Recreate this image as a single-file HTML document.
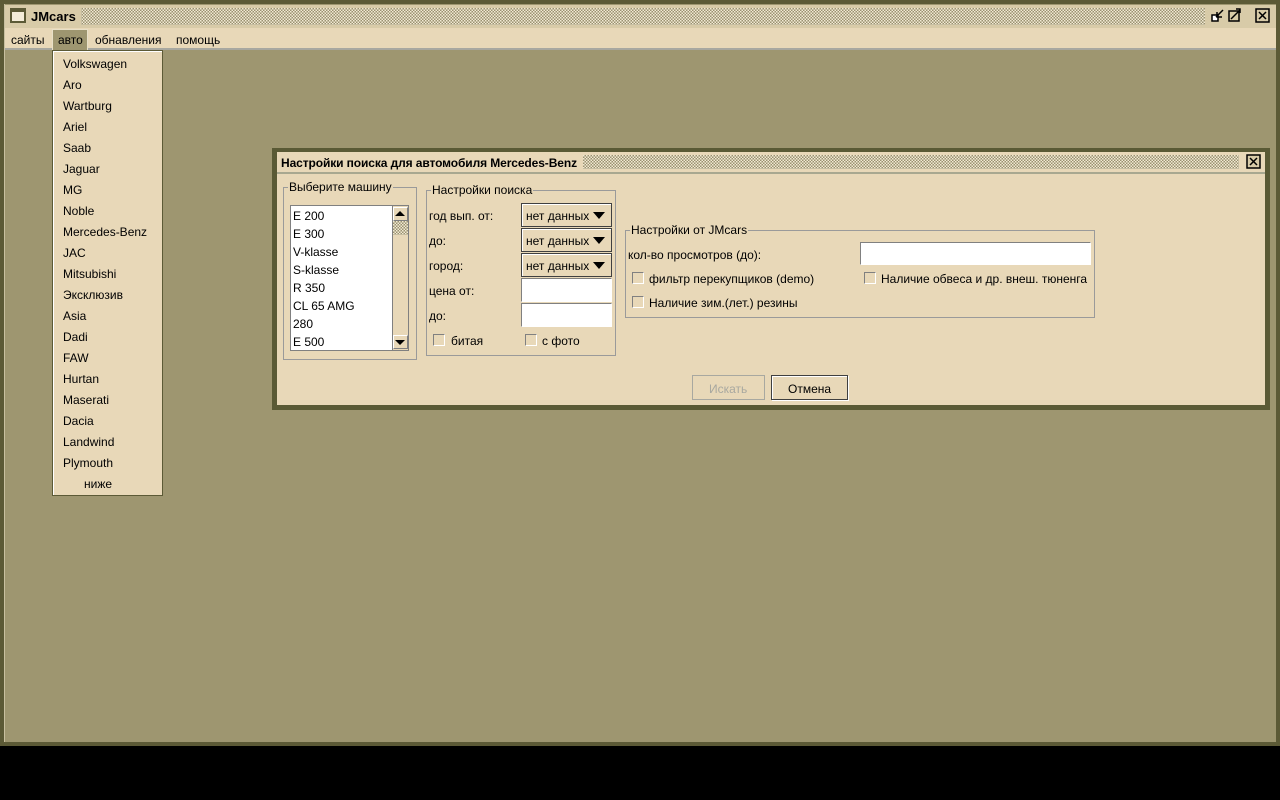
<!DOCTYPE html>
<html><head><meta charset="utf-8"><style>
*{margin:0;padding:0;box-sizing:border-box}
body{width:1280px;height:800px;background:#000;position:relative;overflow:hidden;font-family:"Liberation Sans",sans-serif;font-size:12px;color:#000}
.a{position:absolute}
.dots{background-color:#d8cba8;background-image:repeating-conic-gradient(#9a9170 0 25%,#f2ead4 0 50%);background-size:3px 3px}
.t{position:absolute;white-space:nowrap}
.grp{position:absolute;border:1px solid #9a9a9a}
.grp>.lg{position:absolute;top:-8px;left:4px;background:#e8d8b8;padding:0 1px}
.cb{position:absolute;width:12px;height:12px;border:1px solid #808080;border-right-color:#fff;border-bottom-color:#fff;background:#e8d8b8}
.inp{position:absolute;background:#fff;border:1px solid #808080;border-right-color:#fff;border-bottom-color:#fff}
.cmb{position:absolute;width:91px;height:24px;background:#e8d8b8;border:1px solid #404040;box-shadow:inset 1px 1px 0 #fff}
.cmb span{position:absolute;left:4px;top:5px}
.cmb i{position:absolute;right:6px;top:8px;border-left:6px solid transparent;border-right:6px solid transparent;border-top:7px solid #000}
</style></head><body>
<div class="a" style="left:0;top:0;width:1280px;height:746px;background:#5c5a36"></div>
<div class="a" style="left:4px;top:4px;width:1272px;height:738px;background:#9e9670;border-left:1px solid #c8c0a0"></div>
<div class="a dots" style="left:5px;top:5px;width:1271px;height:23px;"></div>
<div class="a" style="left:5px;top:5px;width:1271px;height:3px;background:#d8cba8"></div>
<div class="a" style="left:5px;top:25px;width:1271px;height:3px;background:#d8cba8"></div>
<div class="a" style="left:5px;top:5px;width:76px;height:23px;background:#d8cba8"></div>
<div class="a" style="left:1205px;top:5px;width:71px;height:23px;background:#d8cba8"></div>
<div class="a" style="left:10px;top:8px;width:16px;height:15px;border:2px solid #5c5a36;background:#f4ecd8"></div>
<div class="a" style="left:12px;top:10px;width:12px;height:2px;background:#5c5a36"></div>
<div class="t" style="left:31px;top:9px;font-weight:bold;font-size:13px">JMcars</div>
<svg class="a" style="left:1210px;top:8px" width="62" height="16" viewBox="0 0 62 16">
<rect x="2" y="7" width="6" height="6" fill="#fff" stroke="#000" stroke-width="1.5"/><path d="M6 9 L13 2 M7 4 v5 h5" stroke="#000" stroke-width="1.5" fill="none"/>
<rect x="19" y="3" width="10" height="10" fill="#d8cba8" stroke="#000" stroke-width="1.5"/><path d="M21 11 L30 2 M26 1 h4 v4" stroke="#000" stroke-width="1.5" fill="none"/>
<rect x="46" y="1" width="13" height="13" fill="#d8cba8" stroke="#000" stroke-width="1.5"/><path d="M49 4 L56 11 M56 4 L49 11" stroke="#000" stroke-width="1.5"/>
</svg>
<div class="a" style="left:5px;top:28px;width:1271px;height:22px;background:#e8d8b8;border-bottom:2px solid #a8a8a0"></div>
<div class="a" style="left:52px;top:29px;width:36px;height:21px;background:#9e9670;border:1px solid #e8e0c8;border-bottom:none"></div>
<div class="t" style="left:11px;top:33px">сайты</div>
<div class="t" style="left:58px;top:33px">авто</div>
<div class="t" style="left:95px;top:33px">обнавления</div>
<div class="t" style="left:176px;top:33px">помощь</div>
<div class="a" style="left:52px;top:50px;width:111px;height:446px;background:#e8d8b8;border:1px solid #5c5a36;box-shadow:inset 1px 1px 0 #fff"></div>
<div class="t" style="left:63px;top:54px;line-height:21px">Volkswagen<br>Aro<br>Wartburg<br>Ariel<br>Saab<br>Jaguar<br>MG<br>Noble<br>Mercedes-Benz<br>JAC<br>Mitsubishi<br>Эксклюзив<br>Asia<br>Dadi<br>FAW<br>Hurtan<br>Maserati<br>Dacia<br>Landwind<br>Plymouth<br><span style="padding-left:21px">ниже</span></div>
<div class="a" style="left:272px;top:148px;width:998px;height:262px;background:#5a5a35"></div>
<div class="a" style="left:277px;top:152px;width:988px;height:253px;background:#e8d8b8"></div>
<div class="a dots" style="left:583px;top:155px;width:656px;height:14px"></div>
<div class="a" style="left:277px;top:172px;width:988px;height:2px;background:#a8a890"></div>
<div class="t" style="left:281px;top:156px;font-weight:bold;letter-spacing:-0.1px">Настройки поиска для автомобиля Mercedes-Benz</div>
<svg class="a" style="left:1246px;top:154px" width="16" height="16"><rect x="1" y="1" width="13" height="13" fill="#d8cba8" stroke="#000" stroke-width="1.5"/><path d="M4 4 L11 11 M11 4 L4 11" stroke="#000" stroke-width="1.5"/></svg>
<div class="grp" style="left:283px;top:187px;width:134px;height:173px"><span class="lg">Выберите машину</span></div>
<div class="a" style="left:290px;top:205px;width:119px;height:146px;background:#fff;border:1px solid #808080"></div>
<div class="t" style="left:293px;top:207px;line-height:18px">E 200<br>E 300<br>V-klasse<br>S-klasse<br>R 350<br>CL 65 AMG<br>280<br>E 500</div>
<div class="a" style="left:392px;top:206px;width:16px;height:144px;background:#e8d8b8;border-left:1px solid #808080"></div>
<div class="a" style="left:393px;top:207px;width:15px;height:14px;border:1px solid #fff;border-right-color:#808080;border-bottom-color:#808080"></div>
<div class="a" style="left:395px;top:211px;border-left:5px solid transparent;border-right:5px solid transparent;border-bottom:5px solid #000"></div>
<div class="a dots" style="left:393px;top:221px;width:15px;height:14px;background-color:#a8a080"></div>
<div class="a" style="left:393px;top:335px;width:15px;height:14px;border:1px solid #fff;border-right-color:#808080;border-bottom-color:#808080"></div>
<div class="a" style="left:395px;top:340px;border-left:5px solid transparent;border-right:5px solid transparent;border-top:5px solid #000"></div>
<div class="grp" style="left:426px;top:190px;width:190px;height:166px"><span class="lg">Настройки поиска</span></div>
<div class="t" style="left:429px;top:209px">год вып. от:</div>
<div class="t" style="left:429px;top:234px">до:</div>
<div class="t" style="left:429px;top:259px">город:</div>
<div class="t" style="left:429px;top:284px">цена от:</div>
<div class="t" style="left:429px;top:309px">до:</div>
<div class="cmb" style="left:521px;top:203px"><span>нет данных</span><i></i></div>
<div class="cmb" style="left:521px;top:228px"><span>нет данных</span><i></i></div>
<div class="cmb" style="left:521px;top:253px"><span>нет данных</span><i></i></div>
<div class="inp" style="left:521px;top:278px;width:91px;height:24px"></div>
<div class="inp" style="left:521px;top:303px;width:91px;height:24px"></div>
<div class="cb" style="left:433px;top:334px"></div><div class="t" style="left:451px;top:334px">битая</div>
<div class="cb" style="left:525px;top:334px"></div><div class="t" style="left:542px;top:334px">с фото</div>
<div class="grp" style="left:625px;top:230px;width:470px;height:88px"><span class="lg">Настройки от JMcars</span></div>
<div class="t" style="left:628px;top:248px">кол-во просмотров (до):</div>
<div class="inp" style="left:860px;top:242px;width:231px;height:23px"></div>
<div class="cb" style="left:632px;top:272px"></div><div class="t" style="left:649px;top:272px">фильтр перекупщиков (demo)</div>
<div class="cb" style="left:864px;top:272px"></div><div class="t" style="left:881px;top:272px">Наличие обвеса и др. внеш. тюненга</div>
<div class="cb" style="left:632px;top:296px"></div><div class="t" style="left:649px;top:296px">Наличие зим.(лет.) резины</div>
<div class="a" style="left:692px;top:375px;width:73px;height:25px;border:1px solid #a8a8a0"></div>
<div class="t" style="left:709px;top:382px;color:#a8a8a0">Искать</div>
<div class="a" style="left:771px;top:375px;width:77px;height:25px;border:1px solid #404040;box-shadow:inset 1px 1px 0 #fff,1px 1px 0 #fff"></div>
<div class="t" style="left:788px;top:382px">Отмена</div>
</body></html>
